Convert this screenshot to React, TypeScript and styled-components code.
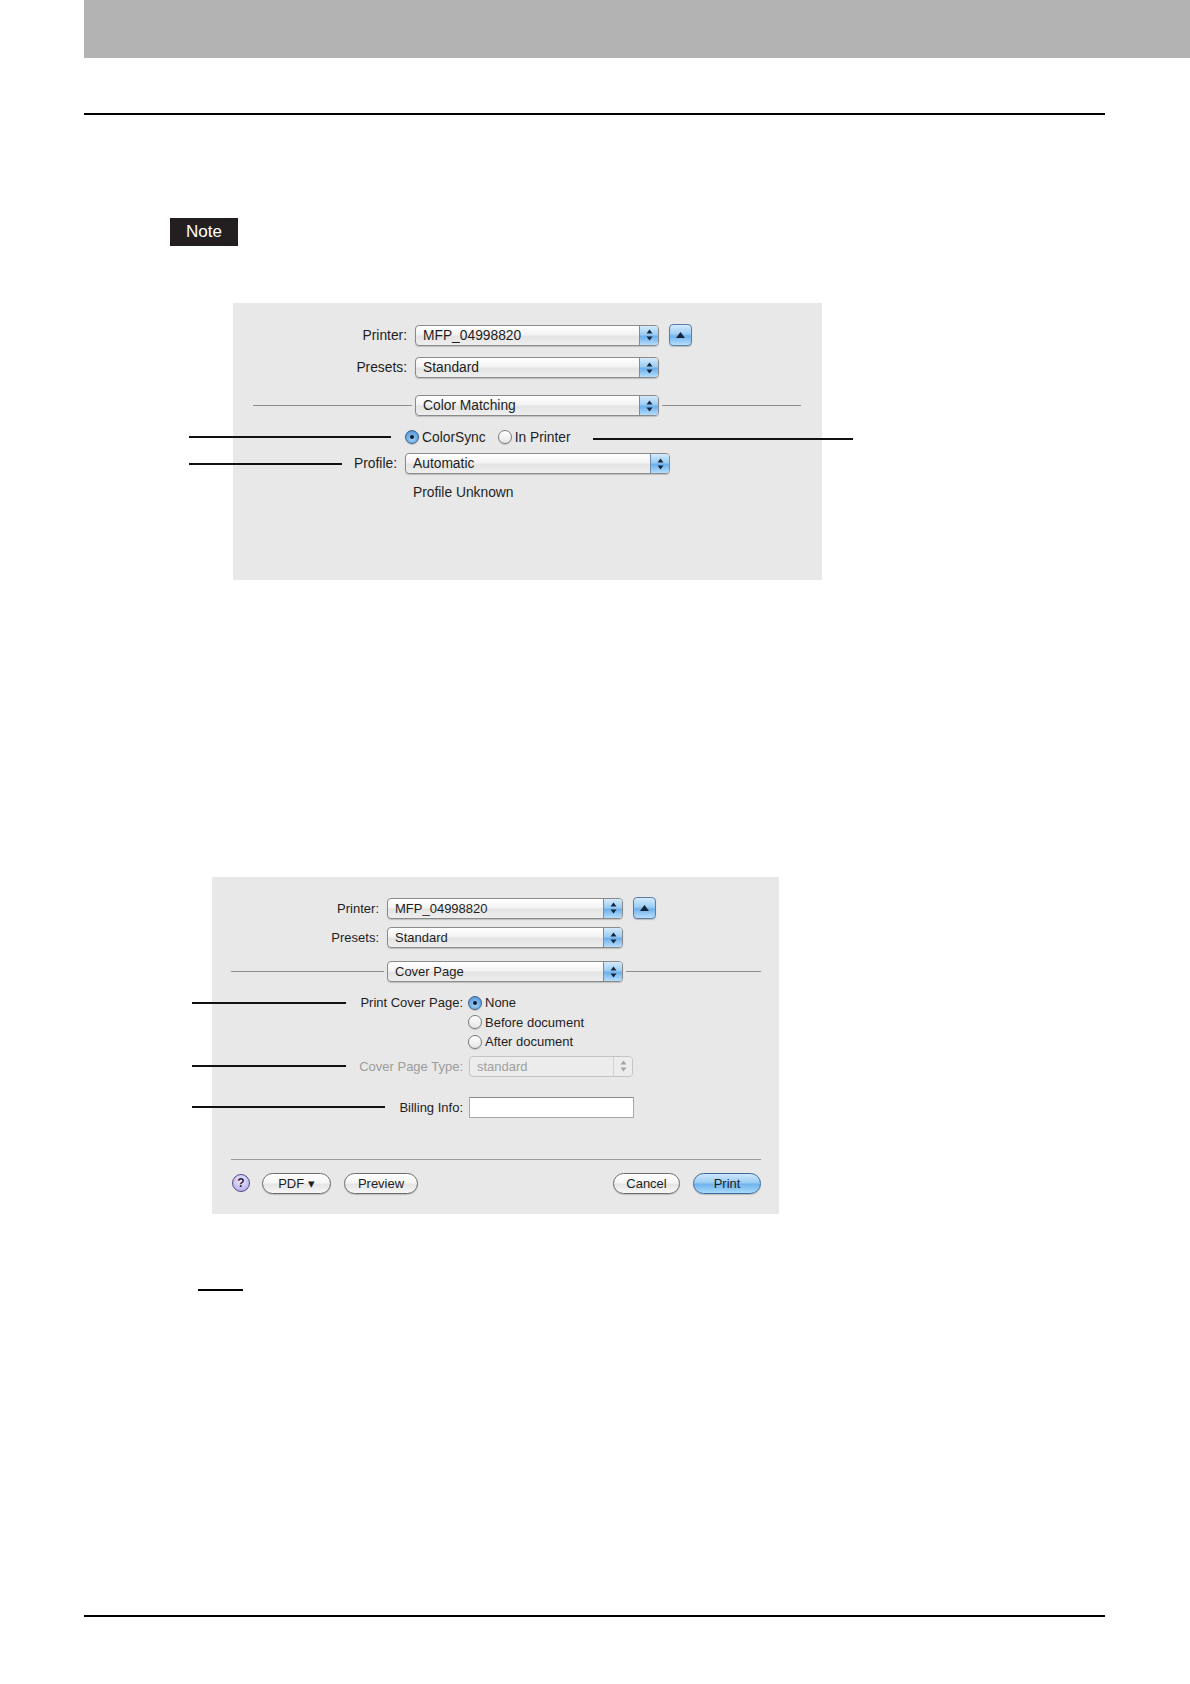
import React from "react";
import styled, { createGlobalStyle } from "styled-components";

const GlobalStyle = createGlobalStyle`
  html, body {
    margin: 0;
    padding: 0;
    background: #ffffff;
  }
  body {
    font-family: "Liberation Sans", Arial, sans-serif;
    color: #1c1c1c;
  }
`;

const Arrows = ({ color }: { color: string }) => (
  <svg width="7" height="12" viewBox="0 0 7 12">
    <polygon points="0.5,4.5 3.5,0.5 6.5,4.5" fill={color} />
    <polygon points="0.5,7.5 3.5,11.5 6.5,7.5" fill={color} />
  </svg>
);

type PopupProps = { width: number; label: string; disabled?: boolean };

const PopupMenu = ({ width, label, disabled }: PopupProps) => (
  <Popup $w={width} $disabled={disabled}>
    <PopupText $disabled={disabled}>{label}</PopupText>
    <PopupArrows $disabled={disabled}>
      <Arrows color={disabled ? "#a4a4a4" : "#16263a"} />
    </PopupArrows>
  </Popup>
);

const Radio = ({ on, label }: { on?: boolean; label: string }) => (
  <RadioItem>
    <RadioDot $on={on} />
    <span>{label}</span>
  </RadioItem>
);

const UpButton = () => (
  <DisclosureButton>
    <svg width="9" height="6" viewBox="0 0 9 6">
      <polygon points="0,6 4.5,0 9,6" fill="#14243a" />
    </svg>
  </DisclosureButton>
);

const App = () => {
  return (
    <Page>
      <GlobalStyle />
      <TopBand />
      <Rule $mt={55} />
      <NoteBadge>Note</NoteBadge>

      <Figure $mt={57} $ml={233}>
        <Dialog $w={589} $h={277} $fs={13.8} $pt={21}>
          <Row $mt={0} $label={174}>
            <LabelCell>Printer:</LabelCell>
            <Controls>
              <PopupMenu width={244} label="MFP_04998820" />
              <UpButton />
            </Controls>
          </Row>
          <Row $mt={11} $label={174}>
            <LabelCell>Presets:</LabelCell>
            <PopupMenu width={244} label="Standard" />
          </Row>
          <SectionRow $mt={17} $pl={20} $pr={21}>
            <SectionLine $w={159} />
            <PopupMenu width={244} label="Color Matching" />
            <SectionLine />
          </SectionRow>
          <Row $mt={13} $label={164}>
            <LabelCell>
              <Leader $w={202} $ml={44} />
            </LabelCell>
            <Controls $gap={12}>
              <Radio on label="ColorSync" />
              <Radio label="In Printer" />
              <TrailLeader $w={260} $ml={10} />
            </Controls>
          </Row>
          <Row $mt={8} $label={164}>
            <LabelCell>
              <Leader $w={153} $ml={44} />
              Profile:
            </LabelCell>
            <PopupMenu width={265} label="Automatic" />
          </Row>
          <Caption $mt={11} $ml={180}>
            Profile Unknown
          </Caption>
        </Dialog>
      </Figure>

      <Figure $mt={297} $ml={212}>
        <Dialog $w={567} $h={337} $fs={13} $pt={20}>
          <Row $mt={0} $label={167}>
            <LabelCell>Printer:</LabelCell>
            <Controls>
              <PopupMenu width={236} label="MFP_04998820" />
              <UpButton />
            </Controls>
          </Row>
          <Row $mt={8} $label={167}>
            <LabelCell>Presets:</LabelCell>
            <PopupMenu width={236} label="Standard" />
          </Row>
          <SectionRow $mt={13} $pl={19} $pr={18}>
            <SectionLine $w={153} />
            <PopupMenu width={236} label="Cover Page" />
            <SectionLine />
          </SectionRow>
          <Row $mt={11} $label={251} $gap={5} $top>
            <LabelCell $lh={19.5}>
              <Leader $w={154} $ml={20} />
              Print Cover Page:
            </LabelCell>
            <RadioStack>
              <Radio on label="None" />
              <Radio label="Before document" />
              <Radio label="After document" />
            </RadioStack>
          </Row>
          <Row $mt={4} $label={251} $gap={6}>
            <LabelCell $disabled>
              <Leader $w={154} $ml={20} />
              Cover Page Type:
            </LabelCell>
            <PopupMenu width={164} label="standard" disabled />
          </Row>
          <Row $mt={20} $label={251} $gap={6}>
            <LabelCell>
              <Leader $w={193} $ml={20} />
              Billing Info:
            </LabelCell>
            <TextField />
          </Row>
          <Divider $mt={41} $pl={19} $pr={18} />
          <ButtonBar>
            <HelpButton>?</HelpButton>
            <PillButton $w={69} $ml={12}>PDF ▾</PillButton>
            <PillButton $w={74} $ml={13}>Preview</PillButton>
            <PillButton $w={67} $ml={0} $push>
              Cancel
            </PillButton>
            <PillButton $w={68} $ml={13} $primary>
              Print
            </PillButton>
          </ButtonBar>
        </Dialog>
      </Figure>

      <ShortRule />
      <Rule $mt={324} />
    </Page>
  );
};

export default App;

const Page = styled.div`
  width: 1190px;
  min-height: 1684px;
  display: flex;
  flex-direction: column;
  align-items: flex-start;
`;

const TopBand = styled.div`
  align-self: stretch;
  margin-left: 84px;
  height: 58px;
  background: #b3b3b3;
`;

const Rule = styled.div<{ $mt: number }>`
  margin-top: ${(p) => p.$mt}px;
  margin-left: 84px;
  width: 1021px;
  height: 2px;
  background: #000;
`;

const ShortRule = styled.div`
  margin-top: 75px;
  margin-left: 198px;
  width: 45px;
  height: 2px;
  background: #000;
`;

const NoteBadge = styled.div`
  margin-top: 103px;
  margin-left: 170px;
  width: 68px;
  height: 28px;
  background: #231f20;
  color: #fff;
  font-size: 17px;
  display: flex;
  align-items: center;
  justify-content: center;
`;

const Figure = styled.div<{ $mt: number; $ml: number }>`
  margin-top: ${(p) => p.$mt}px;
  margin-left: ${(p) => p.$ml}px;
`;

const Dialog = styled.div<{ $w: number; $h: number; $fs: number; $pt: number }>`
  box-sizing: border-box;
  width: ${(p) => p.$w}px;
  height: ${(p) => p.$h}px;
  padding-top: ${(p) => p.$pt}px;
  background: #e8e8e8;
  font-size: ${(p) => p.$fs}px;
  color: #1e1e1e;
  display: flex;
  flex-direction: column;
`;

const Row = styled.div<{ $mt: number; $label: number; $gap?: number; $top?: boolean }>`
  margin-top: ${(p) => p.$mt}px;
  display: grid;
  grid-template-columns: ${(p) => p.$label}px auto;
  column-gap: ${(p) => p.$gap ?? 8}px;
  justify-content: start;
  align-items: ${(p) => (p.$top ? "start" : "center")};
`;

const LabelCell = styled.div<{ $disabled?: boolean; $lh?: number }>`
  display: flex;
  align-items: center;
  justify-content: flex-end;
  white-space: nowrap;
  height: ${(p) => (p.$lh ? `${p.$lh}px` : "auto")};
  color: ${(p) => (p.$disabled ? "#9c9c9c" : "#1e1e1e")};
`;

const Leader = styled.span<{ $w: number; $ml: number }>`
  flex: none;
  width: ${(p) => p.$w}px;
  height: 2px;
  margin-left: -${(p) => p.$ml}px;
  margin-right: auto;
  background: #111;
`;

const TrailLeader = styled.span<{ $w: number; $ml: number }>`
  flex: none;
  width: ${(p) => p.$w}px;
  height: 2px;
  margin-left: ${(p) => p.$ml}px;
  margin-top: 3px;
  background: #111;
`;

const Controls = styled.div<{ $gap?: number }>`
  display: flex;
  align-items: center;
  gap: ${(p) => p.$gap ?? 10}px;
`;

const Popup = styled.div<{ $w: number; $disabled?: boolean }>`
  box-sizing: border-box;
  width: ${(p) => p.$w}px;
  height: 21px;
  display: flex;
  border: 1px solid ${(p) => (p.$disabled ? "#c4c4c4" : "#8a8a8a")};
  border-radius: 4px;
  overflow: hidden;
  background: ${(p) =>
    p.$disabled
      ? "#ececec"
      : "linear-gradient(#ffffff, #f3f3f3 45%, #e4e4e4 55%, #eeeeee)"};
  box-shadow: ${(p) => (p.$disabled ? "none" : "0 1px 1px rgba(0, 0, 0, 0.18)")};
`;

const PopupText = styled.span<{ $disabled?: boolean }>`
  flex: 1;
  display: flex;
  align-items: center;
  padding-left: 7px;
  white-space: nowrap;
  color: ${(p) => (p.$disabled ? "#a0a0a0" : "#1e1e1e")};
`;

const PopupArrows = styled.span<{ $disabled?: boolean }>`
  width: 18px;
  display: flex;
  align-items: center;
  justify-content: center;
  border-left: 1px solid ${(p) => (p.$disabled ? "#d2d2d2" : "#6d8db3")};
  background: ${(p) =>
    p.$disabled
      ? "#ececec"
      : "linear-gradient(#d4eafb, #9cccf3 45%, #6cb0ec 55%, #b5ddfb)"};
`;

const DisclosureButton = styled.span`
  box-sizing: border-box;
  width: 23px;
  height: 22px;
  display: flex;
  align-items: center;
  justify-content: center;
  border: 1px solid #5a7ea8;
  border-radius: 4px;
  background: linear-gradient(#d4eafb, #9ccdf4 45%, #6eb1ec 55%, #b8defb);
  box-shadow: 0 1px 1px rgba(0, 0, 0, 0.2);
`;

const SectionRow = styled.div<{ $mt: number; $pl: number; $pr: number }>`
  margin-top: ${(p) => p.$mt}px;
  padding: 0 ${(p) => p.$pr}px 0 ${(p) => p.$pl}px;
  display: flex;
  align-items: center;
  gap: 3px;
`;

const SectionLine = styled.span<{ $w?: number }>`
  flex: ${(p) => (p.$w ? `0 0 ${p.$w}px` : "1")};
  height: 1px;
  background: #8e8e8e;
`;

const RadioItem = styled.span`
  display: flex;
  align-items: center;
  gap: 3px;
  height: 16px;
  white-space: nowrap;
`;

const RadioDot = styled.span<{ $on?: boolean }>`
  box-sizing: border-box;
  width: 14px;
  height: 14px;
  border-radius: 50%;
  display: flex;
  align-items: center;
  justify-content: center;
  border: 1px solid ${(p) => (p.$on ? "#3f5f88" : "#7a7a7a")};
  background: ${(p) =>
    p.$on
      ? "radial-gradient(circle at 50% 65%, #a6d2f6, #5b9fe0 70%, #3d7fc6)"
      : "linear-gradient(#ffffff, #e6e6e6)"};
  box-shadow: 0 1px 1px rgba(0, 0, 0, 0.15);

  &::after {
    content: "";
    display: ${(p) => (p.$on ? "block" : "none")};
    width: 4px;
    height: 4px;
    border-radius: 50%;
    background: #0f1d2e;
  }
`;

const RadioStack = styled.div`
  display: flex;
  flex-direction: column;

  & > ${RadioItem} {
    height: 19.5px;
  }
`;

const Caption = styled.div<{ $mt: number; $ml: number }>`
  margin-top: ${(p) => p.$mt}px;
  margin-left: ${(p) => p.$ml}px;
  line-height: 16px;
`;

const TextField = styled.span`
  box-sizing: border-box;
  width: 165px;
  height: 21px;
  background: #fff;
  border: 1px solid #a8a8a8;
  border-top-color: #8a8a8a;
`;

const Divider = styled.div<{ $mt: number; $pl: number; $pr: number }>`
  margin: ${(p) => p.$mt}px ${(p) => p.$pr}px 0 ${(p) => p.$pl}px;
  height: 1px;
  background: #9a9a9a;
`;

const ButtonBar = styled.div`
  margin-top: 13px;
  padding: 0 18px 0 20px;
  display: flex;
  align-items: center;
`;

const HelpButton = styled.span`
  box-sizing: border-box;
  width: 18px;
  height: 18px;
  border-radius: 50%;
  border: 1px solid #54498a;
  background: radial-gradient(circle at 50% 35%, #f1eefc, #c0b6ec 70%, #9f93dc);
  display: flex;
  align-items: center;
  justify-content: center;
  font-size: 12px;
  font-weight: bold;
  color: #231a4a;
`;

const PillButton = styled.span<{ $w: number; $ml: number; $primary?: boolean; $push?: boolean }>`
  box-sizing: border-box;
  width: ${(p) => p.$w}px;
  height: 21px;
  margin-left: ${(p) => (p.$push ? "auto" : `${p.$ml}px`)};
  border-radius: 11px;
  display: flex;
  align-items: center;
  justify-content: center;
  white-space: nowrap;
  border: 1px solid ${(p) => (p.$primary ? "#3d6a9e" : "#6c6c6c")};
  background: ${(p) =>
    p.$primary
      ? "linear-gradient(#cfe7fb, #97cbf3 48%, #6db2ee 52%, #a9daf9)"
      : "linear-gradient(#ffffff, #f5f5f5 48%, #e4e4e4 52%, #f6f6f6)"};
  box-shadow: 0 1px 1px rgba(0, 0, 0, 0.18);
  color: #1e1e1e;
`;
